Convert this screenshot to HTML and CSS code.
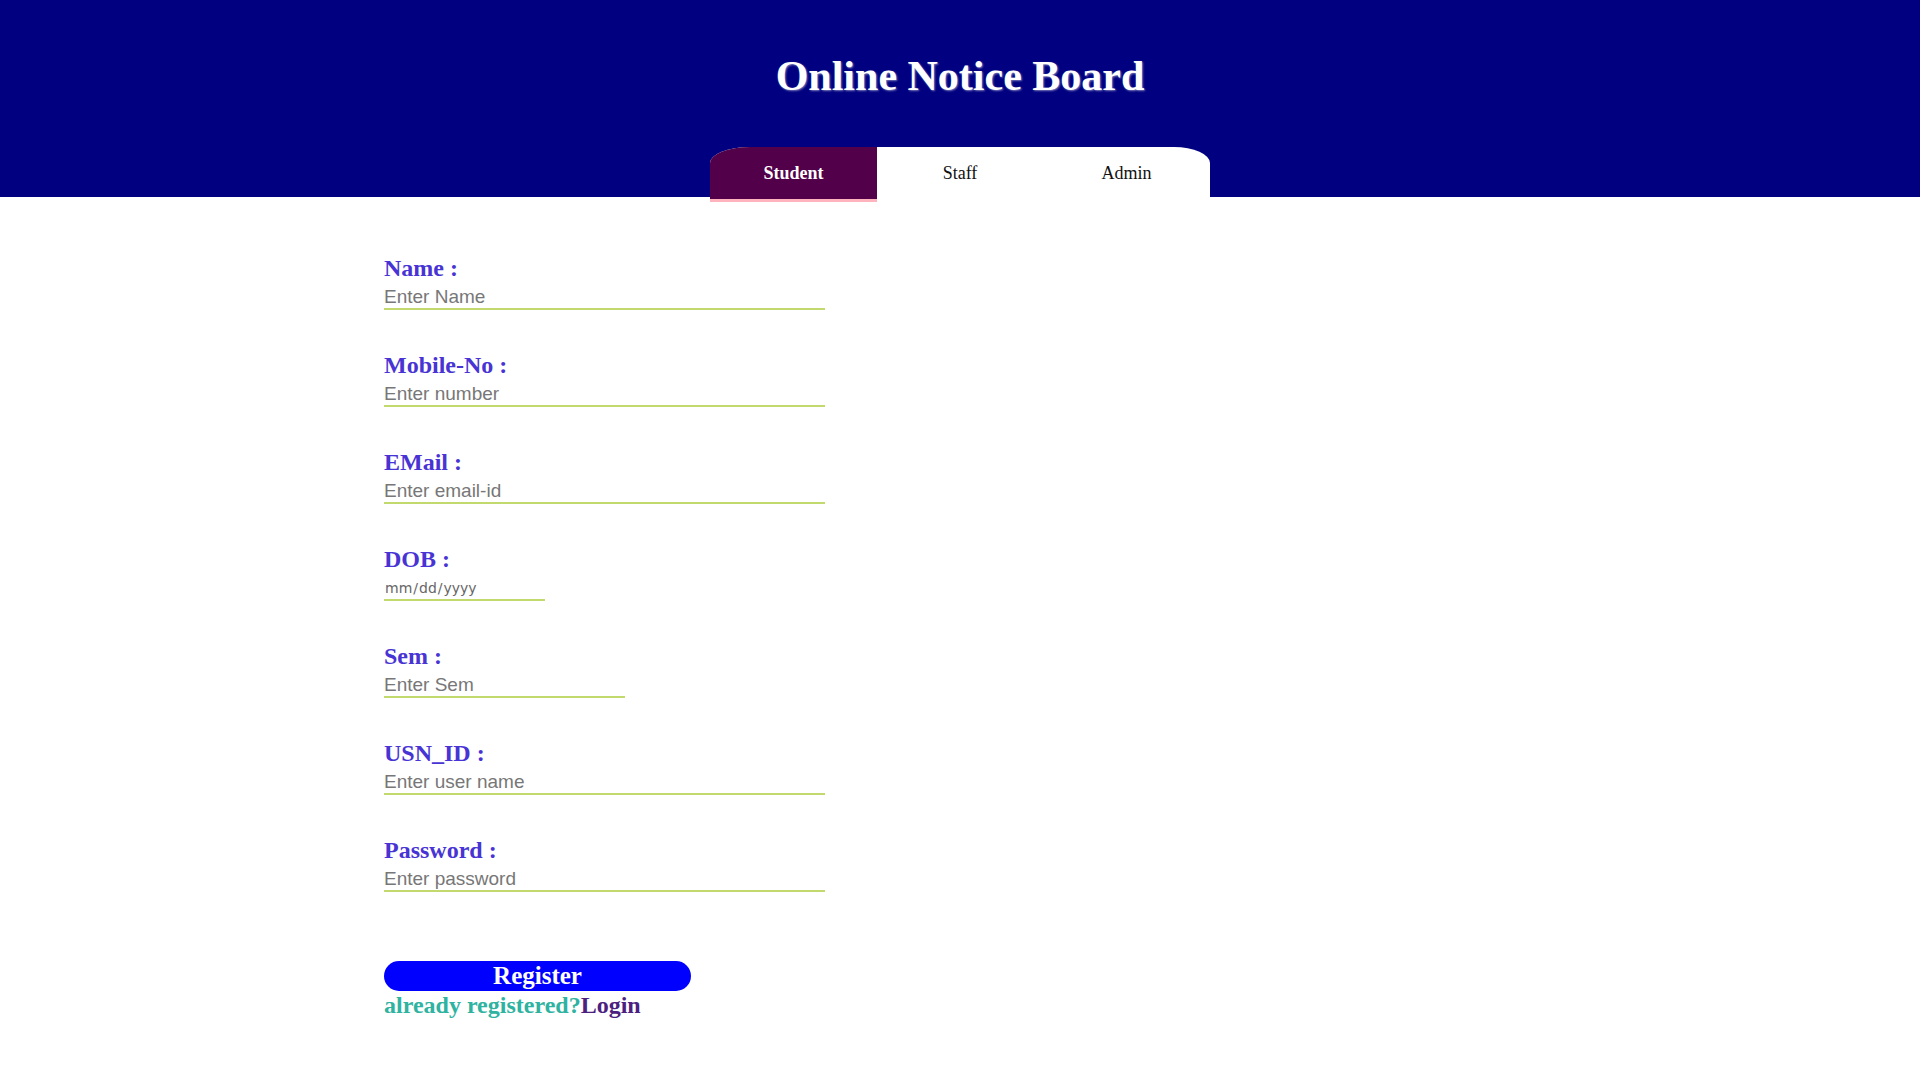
FILE: index.html
```html
<!DOCTYPE html>
<html lang="en">
<head>
<meta charset="utf-8">
<title>Online Notice Board</title>
<link rel="stylesheet" href="styles.css">
</head>
<body>
<header class="top">
  <h1 class="title">Online Notice Board</h1>
  <nav class="tabs">
    <a class="tab tab-active" href="#">Student</a>
    <a class="tab" href="#">Staff</a>
    <a class="tab" href="#">Admin</a>
  </nav>
</header>
<main class="page">
  <form class="reg">
    <div class="field">
      <label class="lbl" for="name">Name :</label>
      <input class="inp" id="name" type="text" placeholder="Enter Name">
    </div>
    <div class="field">
      <label class="lbl" for="mob">Mobile-No :</label>
      <input class="inp" id="mob" type="text" placeholder="Enter number">
    </div>
    <div class="field">
      <label class="lbl" for="mail">EMail :</label>
      <input class="inp" id="mail" type="text" placeholder="Enter email-id">
    </div>
    <div class="field">
      <label class="lbl" for="dob">DOB :</label>
      <input class="inp inp-date" id="dob" type="date">
    </div>
    <div class="field">
      <label class="lbl" for="sem">Sem :</label>
      <input class="inp inp-sem" id="sem" type="text" placeholder="Enter Sem">
    </div>
    <div class="field">
      <label class="lbl" for="usn">USN_ID :</label>
      <input class="inp" id="usn" type="text" placeholder="Enter user name">
    </div>
    <div class="field">
      <label class="lbl" for="pw">Password :</label>
      <input class="inp" id="pw" type="password" placeholder="Enter password">
    </div>
    <button class="btn" type="button">Register</button>
    <p class="already">already registered?<a class="login" href="#">Login</a></p>
  </form>
</main>
</body>
</html>
```
FILE: styles.css
```css
html, body {
  margin: 0;
  padding: 0;
  background: #ffffff;
  font-family: "Liberation Serif", "Times New Roman", serif;
}

.top {
  background: #000080;
  height: 197px;
  padding-top: 53px;
  box-sizing: border-box;
  display: flex;
  flex-direction: column;
  align-items: center;
}

.title {
  margin: 0;
  font-size: 42px;
  line-height: 46px;
  font-weight: bold;
  color: #ffffff;
  text-shadow: 1px 1px 2px #7a7ab8;
}

.tabs {
  margin-top: 48px;
  width: 500px;
  height: 50px;
  display: grid;
  grid-template-columns: 167px 166px 167px;
  background: #ffffff;
  border-radius: 40px 36px 0 0 / 16px 16px 0 0;
  position: relative;
}

.tab {
  display: block;
  text-align: center;
  line-height: 52px;
  font-size: 18px;
  color: #111111;
  text-decoration: none;
}

.tab-active {
  background: #520049;
  color: #ffffff;
  font-weight: bold;
  border-top-left-radius: 40px 16px;
  box-shadow: 0 3px 0 #ffb3bc;
}

.page {
  padding: 57px 0 40px 384px;
}

.reg {
  display: flex;
  flex-direction: column;
  align-items: flex-start;
}

.field {
  display: flex;
  flex-direction: column;
  align-items: flex-start;
  margin-bottom: 41px;
}

.lbl {
  font-size: 24px;
  line-height: 28px;
  font-weight: bold;
  color: #4834d4;
}

.inp {
  margin-top: 4px;
  width: 441px;
  height: 22px;
  padding: 0;
  border: none;
  border-bottom: 2px solid #c2d96e;
  outline: none;
  font-family: "Liberation Sans", Arial, sans-serif;
  font-size: 19px;
  color: #333333;
  background: transparent;
}

.inp::placeholder {
  color: #777777;
}

.inp-date {
  width: 161px;
  font-size: 14px;
  color: #666666;
  font-family: "DejaVu Sans", "Liberation Sans", sans-serif;
}

.inp-date::-webkit-calendar-picker-indicator {
  display: none;
}

.inp-sem {
  width: 241px;
}

.btn {
  margin-top: 28px;
  width: 307px;
  height: 30px;
  padding: 0;
  border: none;
  border-radius: 15px;
  background: #0000ff;
  color: #ffffff;
  font-family: "Liberation Serif", "Times New Roman", serif;
  font-size: 25px;
  line-height: 30px;
  font-weight: bold;
}

.already {
  margin: 0;
  font-size: 24px;
  line-height: 28px;
  font-weight: bold;
  color: #2fb3a1;
}

.login {
  color: #4c1f80;
  text-decoration: none;
}
```
